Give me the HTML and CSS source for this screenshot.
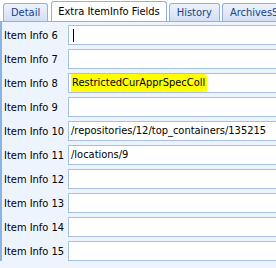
FILE: index.html
```html
<!DOCTYPE html>
<html lang="en">
<head>
    <meta charset="UTF-8">
    <title>Extra ItemInfo Fields</title>
    <link rel="stylesheet" href="styles.css">
</head>
<body>
    <div class="tabs">
        <div class="tab">Detail</div>
        <div class="tab active">Extra ItemInfo Fields</div>
        <div class="tab">History</div>
        <div class="tab">ArchivesSpace</div>
    </div>

    <div class="panel">
        <div class="row"><label>Item Info 6</label><div class="field"><span class="caret"></span></div></div>
        <div class="row"><label>Item Info 7</label><div class="field"></div></div>
        <div class="row"><label>Item Info 8</label><div class="field"><span class="mark">RestrictedCurApprSpecColl</span></div></div>
        <div class="row"><label>Item Info 9</label><div class="field"></div></div>
        <div class="row"><label>Item Info 10</label><div class="field">/repositories/12/top_containers/135215</div></div>
        <div class="row"><label>Item Info 11</label><div class="field">/locations/9</div></div>
        <div class="row"><label>Item Info 12</label><div class="field"></div></div>
        <div class="row"><label>Item Info 13</label><div class="field"></div></div>
        <div class="row"><label>Item Info 14</label><div class="field"></div></div>
        <div class="row"><label>Item Info 15</label><div class="field"></div></div>
    </div>
</body>
</html>
```

FILE: styles.css
```css
:root {
    --tab-border: #8db2e3;
    --panel-bg: #eef4fd;
    --field-border: #a5bee3;
}
body {
    margin: 0;
    width: 276px;
    height: 268px;
    overflow: hidden;
    font-family: "DejaVu Sans Condensed", "DejaVu Sans", sans-serif;
    font-size: 11px;
    color: #000;
    background: var(--panel-bg);
}
.tabs {
    display: flex;
    align-items: flex-end;
    gap: 2px;
    height: 21px;
    padding-left: 3px;
    background: #fff;
    border-bottom: 1px solid var(--tab-border);
    white-space: nowrap;
    overflow: hidden;
}
.tab {
    flex-shrink: 0;
    height: 17px;
    line-height: 17px;
    padding: 0 7px;
    border: 1px solid var(--tab-border);
    border-bottom: none;
    border-radius: 3px 3px 0 0;
    color: #15428b;
    background: linear-gradient(#eef3fb, #d2dff3);
}
.tab.active {
    height: 20px;
    line-height: 19px;
    margin: 0 0 -1px 1px;
    padding: 0 6px;
    color: #000;
    background: #fff;
}
.panel {
    padding: 3px 0 0 2px;
    border-left: 2px solid var(--tab-border);
    display: flex;
    flex-direction: column;
    gap: 4px;
}
.row {
    display: flex;
    align-items: center;
    height: 20px;
}
.row label {
    width: 64px;
    flex-shrink: 0;
    white-space: nowrap;
}
.field {
    flex: 1;
    height: 18px;
    line-height: 18px;
    padding-left: 2px;
    border: 1px solid var(--field-border);
    border-right: none;
    background: #fff;
    white-space: nowrap;
    overflow: hidden;
}
.caret {
    display: inline-block;
    width: 1px;
    height: 13px;
    margin-left: 2px;
    vertical-align: middle;
    background: #000;
}
.mark {
    display: inline-block;
    height: 18px;
    padding: 0 2px 0 1px;
    border-radius: 0 3px 3px 0;
    background: #ffff00;
}
```
